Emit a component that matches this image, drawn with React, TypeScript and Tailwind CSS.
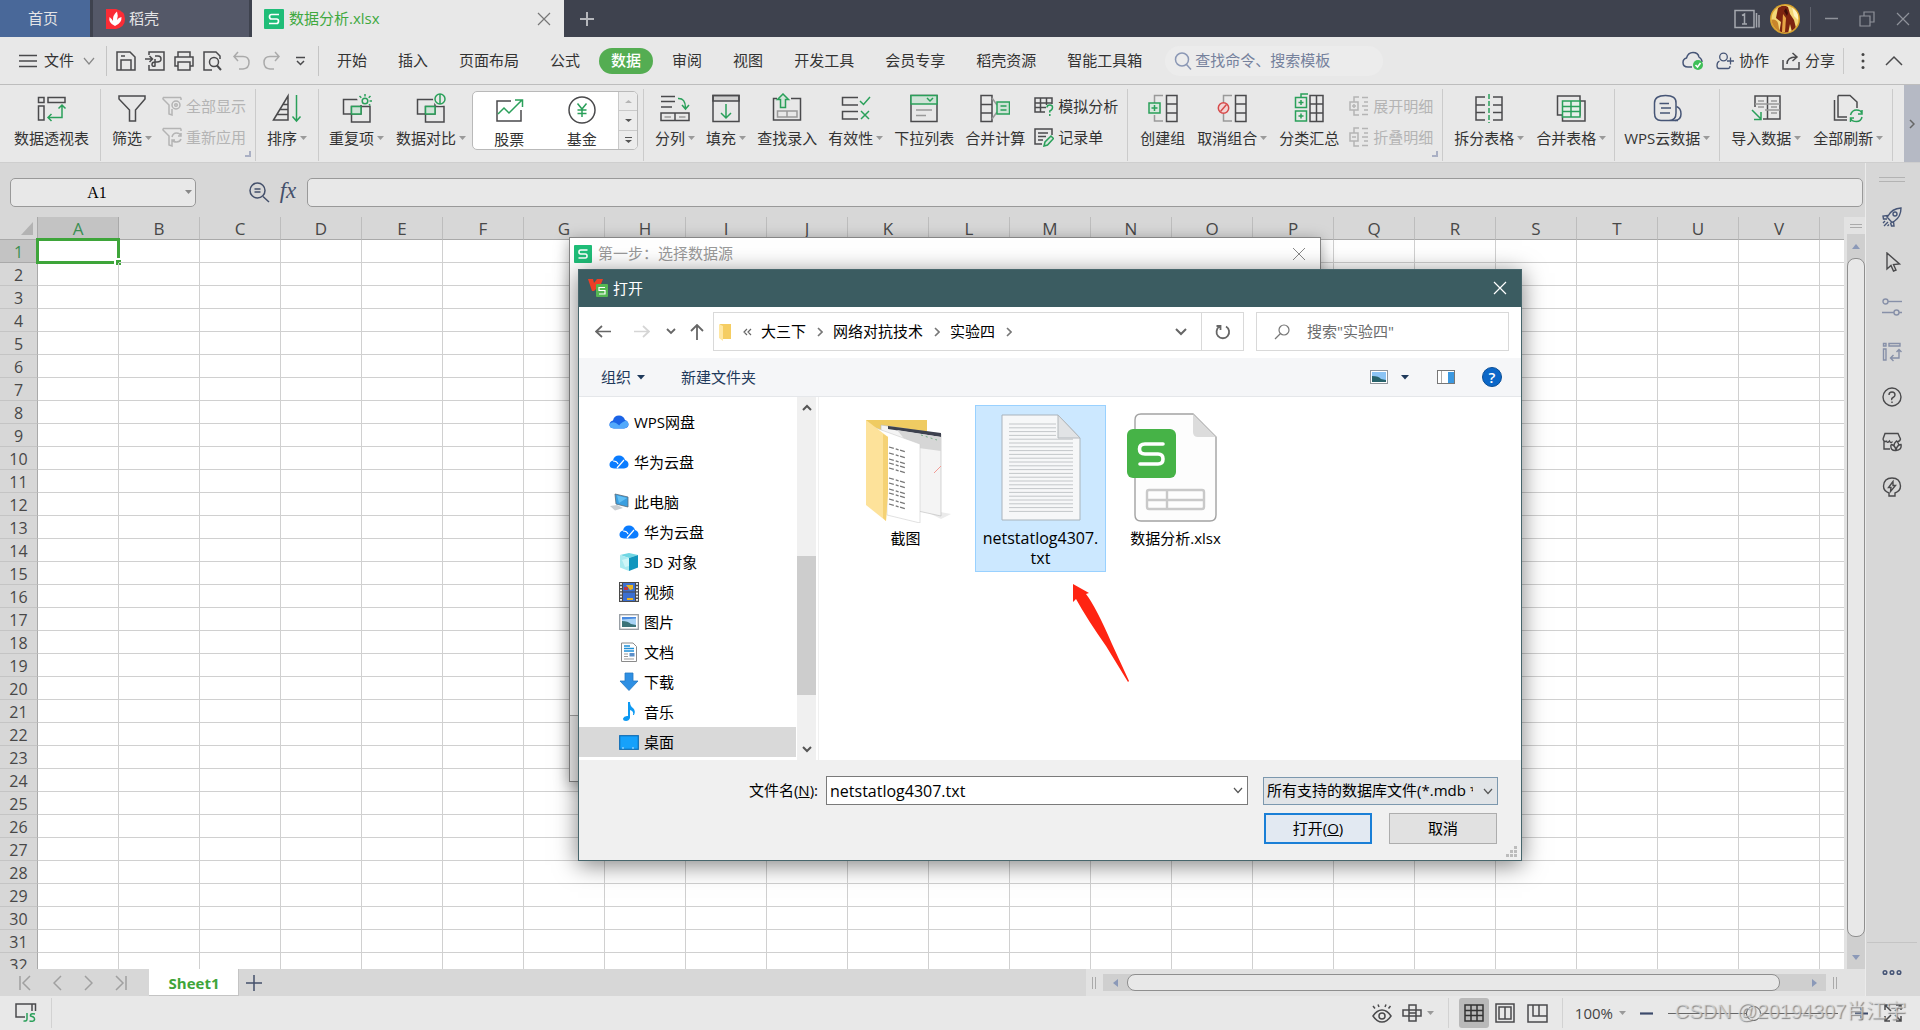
import type { ReactNode } from "react";

const K = "#4a4a4c";
const G = "#2aa05a";
const B = "#465576";

function Ico({ w = 30, h = 30, c = K, sw = 1.5, className = "", children }: {
  w?: number; h?: number; c?: string; sw?: number; className?: string; children: ReactNode;
}) {
  return (
    <svg width={w} height={h} viewBox={`0 0 ${w} ${h}`} fill="none" stroke={c} strokeWidth={sw} className={`shrink-0 ${className}`} aria-hidden="true">
      {children}
    </svg>
  );
}

const Caret = () => (
  <svg width="7" height="5" viewBox="0 0 7 5" className="ml-[3px] shrink-0" aria-hidden="true">
    <path d="M0 0H7L3.5 4Z" fill="#9a9a9a" />
  </svg>
);

/* ribbon icons */
const PivotIcon = () => (
  <Ico>
    <path d="M1.5 4.5H7V9.5H1.5ZM11 4.5H28V9.5H11ZM1.5 13H7V27H1.5Z" />
    <path d="M25 12V24.5H11M21.5 15.5L25 12L28.5 15.5M14.5 21L11 24.5L14.5 28" stroke={G} />
  </Ico>
);
const FilterIcon = () => (
  <Ico><path d="M2 3H28V6L18.5 17V28H12.5V17L2 6Z" /></Ico>
);
const SortIcon = () => (
  <Ico>
    <path d="M1.5 27L16 3V27ZM10.5 11.5H16M7.5 16.5H16M4.5 21.5H16" />
    <path d="M24.5 2V28M20.5 23.5L24.5 28L28.5 23.5" stroke={G} />
  </Ico>
);
const Squares = () => (
  <>
    <path d="M1.5 6.5H19V21H1.5ZM9.5 13.5H28V29H9.5Z" />
    <path d="M9.5 13.5H19V21H9.5Z" fill="#cfe3d7" stroke={G} />
  </>
);
const DuplicateIcon = () => (
  <Ico>
    <Squares />
    <g stroke={G}><path d="M14 2H28V12H17Z" fill="#e8e8e8" stroke="none" /><circle cx="23" cy="8" r="2.8" fill="#e8e8e8" /><path d="M23 1V3.5M17.5 3L19.3 4.7M28.5 3L26.7 4.7M27.5 8H30M28.3 12.5L27 11.3" /></g>
  </Ico>
);
const CompareIcon = () => (
  <Ico>
    <Squares />
    <circle cx="24" cy="6" r="7" fill="#e8e8e8" stroke="none" />
    <circle cx="24" cy="6" r="5" stroke={G} /><path d="M24 1V11" stroke={G} />
  </Ico>
);
const StockIcon = () => (
  <Ico>
    <path d="M17 7H3V27H27V16" />
    <path d="M4 20L10 14L15 19L28 6M21 6H28.5V13" stroke={G} />
  </Ico>
);
const FundIcon = () => (
  <Ico>
    <circle cx="15" cy="16" r="13" />
    <path d="M10.500 9.500L15 15L19.500 9.500M15 15V23M10.500 16H19.500M10.500 19.500H19.500" stroke={G} />
  </Ico>
);
const SplitColIcon = () => (
  <Ico>
    <path d="M1 3.500H15M1 8.500H15M1 14H12M1 20H29V27.500H1ZM15 20V27.500" />
    <path d="M4.500 24H11M19 24H25.500" stroke="#999" />
    <path d="M18 5.500Q25.500 5 25.500 15M22 12L25.500 16L29 12" stroke={G} />
  </Ico>
);
const FillIcon = () => (
  <Ico>
    <path d="M2 2.500H28V8H2Z" fill="#cfcfcf" /><path d="M2 2.500H28V28.500H2Z" />
    <path d="M15 11V25M10 20L15 25L20 20" stroke={G} />
  </Ico>
);
const LookupIcon = () => (
  <Ico>
    <path d="M5 5.500H1.500V27H28.500V5.500H19" />
    <path d="M5.500 18H25V24H5.500ZM15 18V24" stroke="#999" />
    <path d="M11 1L16.500 6.500H13.500V14.500H8.500V6.500H5.500Z" stroke={G} fill="#d5e5db" />
  </Ico>
);
const ValidIcon = () => (
  <Ico>
    <path d="M17 4.500H1.500V12H17M17 18.500H1.500V26H17" />
    <path d="M19 8L22.500 11.500L29 4M20 18L28 26M28 18L20 26" stroke={G} />
  </Ico>
);
const DropListIcon = () => (
  <Ico>
    <path d="M2 2.500H28V28.500H2Z" /><path d="M2 2.500H28V11H2Z" fill="#cfe3d7" stroke={G} />
    <path d="M18 5L21 8L24 5" stroke={G} /><path d="M7 17H23M7 22.500H17" stroke="#999" />
  </Ico>
);
const ConsolidateIcon = () => (
  <Ico>
    <path d="M1 2.500H12V28.500H1ZM1 11.500H12M1 20H12" /><path d="M12 5L17 12M12 26L17 19" stroke="#999" />
    <path d="M17 9H29.500V21H17Z" fill="#cfe3d7" stroke={G} /><path d="M20.500 13H26.500M20.500 17H26.500" stroke={G} />
  </Ico>
);
const GroupIcon = () => (
  <Ico>
    <path d="M15 2.500H6.500V10M6.500 22V28H15" stroke="#999" />
    <path d="M18.500 2.500H29V28.500H18.500ZM18.500 11H29M18.500 20H29" />
    <path d="M1 10H12V20H1Z" fill="#d8e8de" stroke={G} /><path d="M6.500 12V18M3.500 15H9.500" stroke={G} />
  </Ico>
);
const UngroupIcon = () => (
  <Ico>
    <path d="M15 2.500H6.500V9M6.500 21V28H15" stroke="#999" />
    <path d="M18.500 2.500H29V28.500H18.500ZM18.500 11H29M18.500 20H29" />
    <circle cx="6.500" cy="15" r="5.200" stroke="#d64a4a" fill="#f2d5d5" /><path d="M3.500 18.500L9.500 11.500" stroke="#d64a4a" />
  </Ico>
);
const SubtotalIcon = () => (
  <Ico>
    <path d="M16 2.500H29V28.500H16ZM16 11H29M16 20H29M22.500 2.500V28.500" />
    <path d="M1.500 4.500H12.500V14.500H1.500ZM1.500 18H12.500V28H1.500ZM7 7V12M4.500 9.500H9.500M7 20.500V25.500M4.500 23H9.500M7 4.500V1H14" stroke={G} />
  </Ico>
);
const SplitTableIcon = () => (
  <Ico>
    <path d="M11 4H2V27H11M2 12H11M2 19.500H11M19 4H28V27H19M28 12H19M28 19.500H19" />
    <path d="M15 1V30" stroke={G} strokeDasharray="5 2" />
  </Ico>
);
const MergeTableIcon = () => (
  <Ico>
    <path d="M1.500 3H24V22H1.500ZM24 8H29V28H6.500V22" />
    <path d="M6.500 8H24V24H6.500ZM6.500 13.500H24M6.500 18.500H24M15 8V24" stroke={G} fill="#e6efe9" />
  </Ico>
);
const CloudDataIcon = () => (
  <Ico c={B}>
    <path d="M26 27.500H9Q2.500 27.500 2.500 20V10Q2.500 2.500 13.500 2.500T24 10V20Q24 27.500 17 27.500" />
    <path d="M24.500 13.500Q29 15 29 21T23 27.500M7.500 10.500H17M9 15H19M8 20H18" />
  </Ico>
);
const ImportIcon = () => (
  <Ico>
    <path d="M4 14V3H29V26H12M16.500 3V26" /><path d="M7 8H13M20 8H26M7 14H13M20 14H26M20 20H26M4 11H29M14 17H29" stroke="#999" />
    <path d="M1 17L10 26M10 19V26.500H3" stroke={G} />
  </Ico>
);
const RefreshAllIcon = () => (
  <Ico>
    <path d="M1.500 7V27H14M5 2.500H17L24 9V15M5 2.500V24H14" />
    <path d="M17.500 22Q19 17 23.500 17T28.500 20M29 17V21H25M29 24Q28 28.500 23.500 28.500T18 26M17.500 29V25H21" stroke={G} />
  </Ico>
);

/* small ribbon icons */
const ShowAllIcon = () => (
  <Ico w={20} h={20} c="#b4b4b4"><path d="M1 1.500H19M1 1.500V3L7 9V18L10 19V13M19 1.500V4" /><circle cx="14" cy="9" r="4" /><circle cx="14" cy="9" r="1.300" /></Ico>
);
const ReapplyIcon = () => (
  <Ico w={20} h={20} c="#b4b4b4"><path d="M1 1.500H19M1 1.500V3L7 9V18L10 19V16M19 1.500V4M10 10Q11 6 14.500 6T19 9M19 12Q18 15 14.500 15T10.500 13M19 6V9H16M10 16V13H13" /></Ico>
);
const SimulateIcon = () => (
  <Ico w={20} h={20}><path d="M11 16H1V2H18V8M1 7H18M1 11.500H12M6.500 2V16M12.500 2V9" /><path d="M13 11.500Q13 9 15.800 9T18.500 11.500T15.800 15V16.500M15.800 18V20" stroke={G} /></Ico>
);
const RecordIcon = () => (
  <Ico w={20} h={20}><path d="M8 17H1V2H18V8M4 6H14M4 9.500H12M4 13H9" /><path d="M10 19L11 15L17 9L19.500 11.500L13.500 18Z" stroke={G} fill="#d8e8de" /></Ico>
);
const DetailIcon = ({ plus }: { plus: boolean }) => (
  <Ico w={20} h={20} c="#b4b4b4">
    <path d="M10 1H5V6M5 14V19H10M1 6H9V14H1ZM3 10H7M13 1.500H19M15 6H19M13 10H19M15 14H19M13 18.500H19" />
    {plus && <path d="M5 8V12" />}
  </Ico>
);

function Big({ icon, label, caret, className = "px-1.5" }: { icon: ReactNode; label: string; caret?: boolean; className?: string }) {
  return (
    <button className={`flex flex-col items-center ${className}`}>
      {icon}
      <span className="mt-[5px] flex items-center whitespace-nowrap leading-5">
        {label}
        {caret && <Caret />}
      </span>
    </button>
  );
}

function Small({ icon, label, disabled }: { icon: ReactNode; label: string; disabled?: boolean }) {
  return (
    <button disabled={disabled} className="flex h-5 items-center gap-1 whitespace-nowrap leading-5 disabled:text-[#b4b4b4]">
      {icon}
      {label}
    </button>
  );
}

function Group({ children, corner, className = "px-[5px]" }: { children: ReactNode; corner?: boolean; className?: string }) {
  return (
    <div className={`relative flex h-[72px] shrink-0 items-start border-r border-[#cbcbcb] pt-1 ${className}`}>
      {children}
      {corner && <span className="absolute right-1 bottom-1 size-[6px] border-r-2 border-b-2 border-[#aab0c4]" />}
    </div>
  );
}

const SmallCol = ({ children }: { children: ReactNode }) => (
  <div className="flex flex-col gap-[11px] pt-[3px] pr-1 pl-1">{children}</div>
);

function Logo({ size }: { size: number }) {
  return (
    <svg width={size} height={size} viewBox="0 0 20 20" className="shrink-0" aria-hidden="true">
      <rect width="20" height="20" rx="1" fill="#1fbd78" />
      <path d="M15 5.500H7.500Q5.500 5.500 5.500 7.700T7.500 10H12.500Q14.500 10 14.500 12.200T12.500 14.500H5" fill="none" stroke="#fff" strokeWidth="1.700" />
    </svg>
  );
}

function TitleBar() {
  return (
    <header className="flex h-[37px] shrink-0 items-stretch bg-[#3e424e] text-[15px] text-[#e4e4e6]">
      <button className="w-[90px] bg-[#496899] pr-1">首页</button>
      <button className="ml-[3px] flex w-[156px] items-center gap-1 bg-[#545868] pl-[13px]">
        <svg width="19" height="20" viewBox="0 0 19 20" aria-hidden="true">
          <path d="M0 0H10Q19 2 19 10T10 20H0Z" fill="#fb2c36" />
          <path d="M9 17Q2 14 3.500 8Q6 10 7 12Q6.500 6 11 2.500Q12.500 7 11 11Q12.500 8.500 15.500 8Q16 14 9 17Z" fill="#fff" />
        </svg>
        稻壳
      </button>
      <div className="ml-[3px] flex w-[312px] items-center bg-[#e8e8e8] pl-3 text-[#40a83f]">
        <Logo size={20} />
        <span className="ml-[5px] flex-1">数据分析.xlsx</span>
        <button aria-label="关闭" className="mr-[13px]">
          <Ico w={14} h={14} c="#777" sw={1.2}><path d="M1 1L13 13M13 1L1 13" /></Ico>
        </button>
      </div>
      <button aria-label="新建" className="px-[15px]">
        <Ico w={16} h={16} c="#b5b7bc" sw={2}><path d="M8 1V15M1 8H15" /></Ico>
      </button>
      <div className="ml-auto flex items-center">
        <button aria-label="窗口" className="mr-[10px]">
          <Ico w={26} h={20} c="#a5a8af">
            <path d="M1 1.500H20V18.500H1ZM22.500 4V18.500M25 6V18.500M8 6.500L10.500 5V15M8 15H13" />
          </Ico>
        </button>
        <svg width="30" height="30" viewBox="0 0 30 30" aria-hidden="true">
          <defs><clipPath id="av"><circle cx="15" cy="15" r="13.500" /></clipPath></defs>
          <circle cx="15" cy="15" r="15" fill="#d9a22c" />
          <g clipPath="url(#av)">
            <path d="M0 0H30V30H0Z" fill="#f3d777" />
            <path d="M0 16Q6 14 8 19L10 30H0Z" fill="#c9862b" />
            <path d="M8 4Q13 0 18 3L20 10L24 16L26 24L22 28L20 20L18 30H9L11 18L6 14Z" fill="#7d2410" />
            <path d="M13 10L16 14L15 28H12Z" fill="#e9a545" />
            <path d="M16 4L18 9L17 12L14 7Z" fill="#3f0d07" />
            <path d="M22 3Q30 8 28 16L24 12Z" fill="#fff3c0" />
          </g>
        </svg>
        <span className="ml-[10px] h-6 w-px bg-[#5f626d]" />
        <button aria-label="最小化" className="ml-[14px]"><Ico w={13} h={14} c="#8f929a"><path d="M0 6.500H13" /></Ico></button>
        <button aria-label="还原" className="ml-[21px]"><Ico w={16} h={16} c="#8f929a" sw={1.2}><path d="M1 5H11V15H1ZM5 5V1H15V11H11" /></Ico></button>
        <button aria-label="关闭窗口" className="mr-[10px] ml-[21px]"><Ico w={14} h={14} c="#8f929a" sw={1.2}><path d="M1 1L13 13M13 1L1 13" /></Ico></button>
      </div>
    </header>
  );
}

const tabs = ["开始", "插入", "页面布局", "公式", "数据", "审阅", "视图", "开发工具", "会员专享", "稻壳资源", "智能工具箱"];

function MenuBar() {
  return (
    <nav className="flex h-12 shrink-0 items-center border-b border-[#bdbdbd] bg-[#e8e8e8] text-[15px] text-[#333]">
      <button className="ml-[18px] flex items-center gap-[7px]">
        <Ico w={19} h={14} sw={1.4}><path d="M1 1.500H19M1 7H19M1 12.500H19" /></Ico>
        文件
        <Ico w={12} h={8} c="#888" sw={1.2} className="ml-[2px]"><path d="M1 1L6 7L11 1" /></Ico>
      </button>
      <span className="ml-[11px] h-[30px] w-px bg-[#c4c4c4]" />
      <div className="ml-[9px] flex items-center gap-[9px]">
        <button aria-label="保存"><Ico w={20} h={20}><path d="M1 1H14L19 6V19H1ZM5 19V9H15V19M5 5H9" /></Ico></button>
        <button aria-label="输出为PDF"><Ico w={20} h={20}><path d="M4 4V1H19V19H4V14M0 8H7M4.500 5L7.500 8L4.500 11M10 5H13Q16 5 16 8T12 11H10Q7 11 7 13.500T10 15V8" /></Ico></button>
        <button aria-label="打印"><Ico w={20} h={20}><path d="M4 6V1H16V6M4 15H1V6H19V15H16M4 11H16V19H4Z" /></Ico></button>
        <button aria-label="打印预览"><Ico w={20} h={20}><path d="M9 19H1V1H13L17 5V8" /><circle cx="11" cy="11" r="4.500" /><path d="M14 14.500L18 19" strokeWidth={2} /></Ico></button>
        <button aria-label="撤销"><Ico w={20} h={20} c="#aaa"><path d="M6 1L2 5.500L6 10M2 5.500H11Q17 5.500 17 11.500T11 18H7" /></Ico></button>
        <button aria-label="恢复"><Ico w={20} h={20} c="#aaa"><path d="M14 1L18 5.500L14 10M18 5.500H9Q3 5.500 3 11.500T9 18H13" /></Ico></button>
        <button aria-label="更多"><Ico w={20} h={20}><path d="M6 6.500H15M7 10L10.500 13.500L14 10" /></Ico></button>
      </div>
      <span className="ml-2 h-[30px] w-px bg-[#c4c4c4]" />
      <div className="ml-[3px] flex gap-px">
        {tabs.map((t) => (
          <button key={t} className={`mx-[3px] h-[26px] rounded-full px-3 whitespace-nowrap ${t === "数据" ? "bg-[#54ad52] font-medium text-white" : ""}`}>
            {t}
          </button>
        ))}
      </div>
      <label className="ml-2 flex h-[30px] w-[218px] items-center gap-[3px] rounded-full bg-[#ececec] pl-[9px]">
        <Ico w={18} h={18} c="#8b98b5"><circle cx="8" cy="7.500" r="6.500" /><path d="M12.500 12.500L17 17.500" /></Ico>
        <input aria-label="查找命令" placeholder="查找命令、搜索模板" className="w-full min-w-0 bg-transparent outline-none placeholder:text-[#75819c]" />
      </label>
      <div className="ml-auto flex items-center">
        <button aria-label="云同步">
          <Ico w={22} h={20} c={B}>
            <path d="M10 16H6Q1 16 1 11.500Q1 8 4.500 7Q6 1.500 11 1.500T17 6Q20 8 20 11" />
            <circle cx="16" cy="14" r="5" fill="#3fbf57" stroke="none" /><path d="M13.500 14L15.500 16L18.500 12" stroke="#fff" />
          </Ico>
        </button>
        <button className="ml-3 flex items-center gap-[5px]">
          <Ico w={18} h={18} c={B} sw={1.3}><circle cx="7.500" cy="5" r="3.800" /><path d="M3.500 9Q1 10 1 13.500Q1 16.500 3 16.500H12Q14 16.500 14 14M14.500 5.500V12.500M11 9H18" /></Ico>
          协作
        </button>
        <button className="ml-[13px] flex items-center gap-[5px]">
          <Ico w={18} h={18}><path d="M1 8V17H17V10M5 12Q5 5 14 5M10.500 1L15 5L10.500 9" /></Ico>
          分享
        </button>
        <span className="ml-2 h-[26px] w-px bg-[#c9c9c9]" />
        <button aria-label="选项" className="ml-[17px]">
          <svg width="4" height="18" viewBox="0 0 4 18" fill="#444" aria-hidden="true"><circle cx="2" cy="2.500" r="1.500" /><circle cx="2" cy="9" r="1.500" /><circle cx="2" cy="15.500" r="1.500" /></svg>
        </button>
        <button aria-label="收起功能区" className="mr-[17px] ml-5"><Ico w={18} h={11}><path d="M1 10L9 2L17 10" /></Ico></button>
      </div>
    </nav>
  );
}

function Ribbon() {
  return (
    <div className="flex h-[78px] shrink-0 items-start overflow-hidden border-b border-[#cecece] bg-[#e8e8e8] pt-1 text-[15px] text-[#333]">
      <Group className="pr-[5px] pl-2"><Big icon={<PivotIcon />} label="数据透视表" /></Group>
      <Group corner>
        <Big icon={<FilterIcon />} label="筛选" caret />
        <SmallCol>
          <Small icon={<ShowAllIcon />} label="全部显示" disabled />
          <Small icon={<ReapplyIcon />} label="重新应用" disabled />
        </SmallCol>
      </Group>
      <Group><Big icon={<SortIcon />} label="排序" caret /></Group>
      <Group className="pr-[5px] pl-1">
        <Big icon={<DuplicateIcon />} label="重复项" caret />
        <Big icon={<CompareIcon />} label="数据对比" caret />
        <div className="-mt-[2px] flex h-[59px] w-[166px] overflow-hidden rounded-[5px] border border-[#b9b9b9] bg-white">
          <Big icon={<StockIcon />} label="股票" className="flex-1 pt-[2px]" />
          <Big icon={<FundIcon />} label="基金" className="flex-1 pt-[2px]" />
          <div className="flex w-[19px] flex-col divide-y divide-[#c9c9c9] border-l border-[#c9c9c9] bg-[#ececec]">
            <button aria-label="上一行" className="flex flex-1 items-center justify-center"><Ico w={7} h={5} sw={0}><path d="M0 4H7L3.500 1Z" fill="#b5b5b5" /></Ico></button>
            <button aria-label="下一行" className="flex flex-1 items-center justify-center"><Ico w={7} h={5} sw={0}><path d="M0 1H7L3.500 4Z" fill="#555" /></Ico></button>
            <button aria-label="全部" className="flex flex-1 items-center justify-center"><Ico w={7} h={8} sw={0}><path d="M0 1H7V2H0ZM0 4H7L3.500 7Z" fill="#555" /></Ico></button>
          </div>
        </div>
      </Group>
      <Group className="-space-x-px px-[5px]">
        <Big icon={<SplitColIcon />} label="分列" caret />
        <Big icon={<FillIcon />} label="填充" caret />
        <Big icon={<LookupIcon />} label="查找录入" />
        <Big icon={<ValidIcon />} label="有效性" caret />
        <Big icon={<DropListIcon />} label="下拉列表" />
        <Big icon={<ConsolidateIcon />} label="合并计算" />
        <SmallCol>
          <Small icon={<SimulateIcon />} label="模拟分析" />
          <Small icon={<RecordIcon />} label="记录单" />
        </SmallCol>
      </Group>
      <Group corner className="pr-[5px] pl-1.5">
        <Big icon={<GroupIcon />} label="创建组" />
        <Big icon={<UngroupIcon />} label="取消组合" caret />
        <Big icon={<SubtotalIcon />} label="分类汇总" />
        <SmallCol>
          <Small icon={<DetailIcon plus />} label="展开明细" disabled />
          <Small icon={<DetailIcon plus={false} />} label="折叠明细" disabled />
        </SmallCol>
      </Group>
      <Group className="pr-[2px] pl-[5px]">
        <Big icon={<SplitTableIcon />} label="拆分表格" caret />
        <Big icon={<MergeTableIcon />} label="合并表格" caret />
      </Group>
      <Group className="w-[105px] justify-center"><Big icon={<CloudDataIcon />} label="WPS云数据" caret className="" /></Group>
      <Group className="pr-[3px] pl-[5px]">
        <Big icon={<ImportIcon />} label="导入数据" caret />
        <Big icon={<RefreshAllIcon />} label="全部刷新" caret />
      </Group>
      <button aria-label="更多功能" className="-mt-1 ml-auto flex h-[77px] w-4 shrink-0 items-center justify-center bg-[#b5b9c4]">
        <Ico w={6} h={10} c="#666"><path d="M1 1L5 5L1 9" /></Ico>
      </button>
    </div>
  );
}

function FormulaBar() {
  return (
    <div className="flex h-[54px] items-start pt-[15px] pr-[2px] pl-[10px]">
      <div className="relative h-[29px] w-[186px]">
        <input aria-label="名称框" defaultValue="A1" className="size-full rounded-[5px] border border-[#999] bg-[#e8e8e8] pr-3 text-center font-['Liberation_Serif',serif] text-base text-black outline-none" />
        <svg width="7" height="5" viewBox="0 0 7 5" className="absolute top-3 right-1" aria-hidden="true"><path d="M0 0H7L3.500 4Z" fill="#888" /></svg>
      </div>
      <button aria-label="浏览公式结果" className="mt-1 ml-[52px]"><Ico w={22} h={21} c="#44506b"><circle cx="9.500" cy="8.500" r="7.500" /><path d="M15 14.500L21 20M6.500 7H12.500M6.500 10H12.500" /></Ico></button>
      <button aria-label="插入函数" className="ml-[7px] w-[22px] font-['Liberation_Serif',serif] text-[23px] leading-[26px] text-[#44506b] italic">fx</button>
      <input aria-label="编辑栏" className="ml-2 h-[29px] min-w-0 flex-1 rounded-[5px] border border-[#999] bg-[#e8e8e8] px-2 outline-none" />
    </div>
  );
}

const cols = "ABCDEFGHIJKLMNOPQRSTUVW".split("");
const rows = Array.from({ length: 32 }, (_, i) => i + 1);

function Sheet() {
  return (
    <div className="min-h-0 min-w-0 flex-1 overflow-hidden">
      <table className="w-[1901px] table-fixed border-separate border-spacing-0 bg-white text-base text-[#484848]">
        <thead>
          <tr className="h-[23px]">
            <th className="w-[38px] border-r border-b border-[#a9a9a9] bg-[#d7d7d7] p-0">
              <svg width="12" height="13" viewBox="0 0 12 13" className="mr-1 ml-auto" aria-hidden="true"><path d="M12 0V13H0Z" fill="#b3b3b3" /></svg>
            </th>
            {cols.map((c) => (
              <th
                key={c}
                className={`border-r border-b px-0 pt-[2px] pb-0 text-[17px] leading-5 font-normal ${c === "A" ? "border-[#a9a9a9] bg-[#c3c3c3] text-[#3b8f52]" : "border-r-[#bdbdbd] border-b-[#a9a9a9] bg-[#d7d7d7]"}`}
              >
                {c === "W" ? "" : c}
              </th>
            ))}
          </tr>
        </thead>
        <tbody>
          {rows.map((r) => (
            <tr key={r} className="h-[23px]">
              <th className={`border-r border-b border-r-[#a9a9a9] px-0 pt-[2px] pb-0 leading-5 font-normal ${r === 1 ? "border-b-[#a9a9a9] bg-[#c3c3c3] text-[#3b8f52]" : "border-b-[#c4c4c4] bg-[#d7d7d7]"}`}>
                {r}
              </th>
              {cols.map((c) => (
                <td key={c} className="relative border-r border-b border-[#d0d0d0] p-0">
                  {c === "A" && r === 1 && (
                    <span className="absolute -inset-[2px] border-[3px] border-[#3ea53a]">
                      <span className="absolute -right-1 -bottom-1 size-[7px] border-t-2 border-l-2 border-white bg-[#3ea53a]" />
                    </span>
                  )}
                </td>
              ))}
            </tr>
          ))}
        </tbody>
      </table>
    </div>
  );
}

function VScroll() {
  return (
    <div className="flex w-[21px] shrink-0 flex-col bg-[#e2e2e2] pl-[3px]">
      <div className="flex h-[17px] flex-col items-center justify-center gap-[2px]">
        <span className="h-px w-3 bg-[#aaa]" />
        <span className="h-px w-3 bg-[#aaa]" />
      </div>
      <div className="flex min-h-0 flex-1 flex-col items-center bg-[#cfcfcf]">
        <div className="flex h-6 items-center"><Ico w={8} h={5} sw={0}><path d="M0 5H8L4 0Z" fill="#8b99b8" /></Ico></div>
        <div className="w-full flex-1 rounded-lg border border-[#8f8f8f] bg-[#e8e8e8]" />
        <div className="flex h-8 items-center pt-2"><Ico w={8} h={5} sw={0}><path d="M0 0H8L4 5Z" fill="#8b99b8" /></Ico></div>
      </div>
    </div>
  );
}

function SheetTabs() {
  return (
    <div className="flex h-[27px] shrink-0 items-stretch bg-[#d7d7d7]">
      <div className="flex w-[149px] items-center gap-[22px] pl-[19px]">
        <button aria-label="第一张"><Ico w={12} h={16} c="#a0a0a0"><path d="M1 1V15M11 1L4 8L11 15" /></Ico></button>
        <button aria-label="上一张"><Ico w={9} h={16} c="#a0a0a0"><path d="M8 1L1 8L8 15" /></Ico></button>
        <button aria-label="下一张"><Ico w={9} h={16} c="#a0a0a0"><path d="M1 1L8 8L1 15" /></Ico></button>
        <button aria-label="最后一张"><Ico w={12} h={16} c="#a0a0a0"><path d="M11 1V15M1 1L8 8L1 15" /></Ico></button>
      </div>
      <button className="w-[90px] border-r border-b border-[#c4c4c4] bg-white pt-[2px] pl-px text-[15px] font-bold text-[#3ea53a]">Sheet1</button>
      <button aria-label="新建工作表" className="ml-[6px]"><Ico w={18} h={18} c="#44506b"><path d="M9 1V17M1 9H17" /></Ico></button>
      <div className="ml-auto flex w-[779px] items-center bg-[#e2e2e2] pl-[6px]">
        <Ico w={4} h={12} c="#aaa" sw={1}><path d="M.5 0V12M3.500 0V12" /></Ico>
        <div className="mx-[7px] flex h-[17px] flex-1 items-center bg-[#cfcfcf]">
          <div className="flex w-6 justify-center"><Ico w={5} h={8} sw={0}><path d="M5 0V8L0 4Z" fill="#8b99b8" /></Ico></div>
          <div className="h-[17px] flex-1 rounded-lg border border-[#8f8f8f] bg-[#e8e8e8]" />
          <div className="flex w-[46px] justify-end pr-[9px]"><Ico w={5} h={8} sw={0}><path d="M0 0V8L5 4Z" fill="#8b99b8" /></Ico></div>
        </div>
        <Ico w={4} h={12} c="#aaa" sw={1} className="mr-7"><path d="M.5 0V12M3.500 0V12" /></Ico>
      </div>
    </div>
  );
}

function SidePanel() {
  return (
    <aside className="flex w-[55px] shrink-0 flex-col items-center border-l border-[#ebebeb] bg-[#d7d7d7] pt-[14px] pr-[2px]">
      <div className="h-[5px] w-[26px] border-y border-[#b3b3b3]" />
      <div className="mt-[25px] flex flex-col gap-[25px]">
        <button aria-label="火箭" className="h-5"><Ico w={20} h={20} c={B} sw={1.4}><path d="M6 9Q10 1.500 19 1Q19 10 12 14.500L10 15.500L5 10ZM6 8.500L1 9L1.500 12L5 12M11.500 14.500L12 19L9.500 19L8.500 15.500M1 16L3 14M2 19L6 15M5.500 19L7 17.500" /><circle cx="13" cy="7" r="2" /></Ico></button>
        <button aria-label="选择" className="h-5"><Ico w={20} h={20} sw={1.4}><path d="M5 1V17L9 13.500L11.500 19L14 18L11.500 12.500L17.500 12Z" /></Ico></button>
        <button aria-label="属性" className="h-5"><Ico w={20} h={20} c="#8790a8" sw={1.4}><circle cx="3.500" cy="4.500" r="2.500" /><path d="M6 4.500H20" /><circle cx="14.500" cy="15.500" r="2.500" /><path d="M0 15.500H12M17 15.500H20" /></Ico></button>
        <button aria-label="透视表" className="h-5"><Ico w={20} h={20} c="#8790a8" sw={1.4}><path d="M1.500 1.500H4V4H1.500ZM7 1.500H18V4H7ZM1.500 7H4V18H1.500ZM17 8V16H9M14.500 10L17 7.500L19.500 10M11.500 13L8.500 16L11.500 19" /></Ico></button>
        <button aria-label="帮助" className="h-5"><Ico w={20} h={20} sw={1.4}><circle cx="10" cy="10" r="9" /><path d="M7 8Q7 5 10 5T13 8Q13 9.500 11 10.500T10 13M10 14.500V16" /></Ico></button>
        <button aria-label="稻壳商城" className="h-5"><Ico w={20} h={20} sw={1.4}><path d="M8 17H2V9M1 7L3 1.500H16L18.500 7Q18 9.500 15.500 9.500M1 7Q1.500 10 4.500 9.500M4.500 8.500Q5 12 7.500 9Q9 12 10.500 9.500M9 12.500Q13 13 14 18Q15 13 19 12.500Q20 18 14 18.500T9 12.500M12 13.500Q12 11 14.500 9Q17 11 16.500 13" /></Ico></button>
        <button aria-label="灵感" className="h-5"><Ico w={20} h={20} sw={1.4}><path d="M7 16Q1.500 14 1.500 9Q2 1 10 1T18.500 9Q18.500 14 13 16V19H7Z" /><path d="M11 4.500L6.500 10.500H9L8.500 14.500L13.500 8.500H11Z" /></Ico></button>
      </div>
      <div className="mt-auto flex h-[54px] w-[50px] justify-center border-t border-[#c4c4c4] pt-[25px]">
        <button aria-label="更多面板" className="h-2"><Ico w={20} h={7} c={B}><circle cx="3" cy="3.500" r="1.800" /><circle cx="10" cy="3.500" r="1.800" /><circle cx="17" cy="3.500" r="1.800" /></Ico></button>
      </div>
    </aside>
  );
}

function StatusBar() {
  return (
    <footer className="relative flex h-[34px] shrink-0 items-center bg-[#e8e8e8] text-[15px] text-[#444]">
      <button aria-label="JS宏" className="ml-[15px]">
        <svg width="22" height="20" viewBox="0 0 22 20" fill="none" stroke={K} strokeWidth="1.500" aria-hidden="true">
          <path d="M10 14H1V1H17V8M17 1H20.500V8" />
          <path d="M12 10V16Q12 18.500 8.500 18M20 11Q15 10 15.500 13Q20 14 19.500 16.500T14.500 18" stroke={G} />
        </svg>
      </button>
      <span className="ml-[14px] h-[30px] w-px bg-[#d2d2d2]" />
      <div className="ml-auto flex items-center">
        <button aria-label="护眼模式"><Ico w={20} h={20}><path d="M1 13Q5 7 10 7T19 13Q15 19 10 19T1 13ZM1 3L3 5.500M6 1.500L7 4M18.500 3L16.500 5.500M14 1.500L13 4" /><circle cx="10" cy="13" r="3" /></Ico></button>
        <button aria-label="阅读模式" className="ml-[10px] flex items-center gap-[2px]">
          <Ico w={20} h={18}><path d="M7 1H14V17H7ZM1 6H19V12H1ZM7 9H14" /></Ico>
          <Caret />
        </button>
        <span className="ml-[14px] h-[30px] w-px bg-[#d2d2d2]" />
        <button aria-label="普通视图" className="ml-[10px] flex h-[30px] w-[30px] items-center justify-center rounded-[3px] bg-[#b9b9b9]"><Ico w={20} h={18} c="#333"><path d="M1 1H19V17H1ZM1 6.500H19M1 11.500H19M7 1V17M13 1V17" /></Ico></button>
        <button aria-label="分页预览" className="ml-[6px]"><Ico w={20} h={20}><path d="M1 1H19V19H1ZM4 4H16V16H4ZM10 4V16" /></Ico></button>
        <button aria-label="页面布局视图" className="ml-[12px]"><Ico w={21} h={19}><path d="M1 1H20V18H1ZM6 1V12H20M12 1V12" /></Ico></button>
        <span className="ml-[14px] h-[30px] w-px bg-[#d2d2d2]" />
        <button className="ml-3 flex items-center gap-[3px]">100%<Caret /></button>
        <button aria-label="缩小" className="ml-[14px]"><Ico w={13} h={13} c="#3c4a6b" sw={2.2}><path d="M0 6.500H13" /></Ico></button>
        <input
          type="range"
          aria-label="缩放比例"
          defaultValue={50}
          className="mr-[17px] ml-[15px] h-4 w-[170px] appearance-none bg-[linear-gradient(#666,#666)] bg-[length:100%_1px] bg-center bg-no-repeat [&::-webkit-slider-thumb]:size-[15px] [&::-webkit-slider-thumb]:appearance-none [&::-webkit-slider-thumb]:rounded-full [&::-webkit-slider-thumb]:border [&::-webkit-slider-thumb]:border-[#555] [&::-webkit-slider-thumb]:bg-[#e8e8e8]"
        />
        <button aria-label="放大"><Ico w={13} h={13} c="#3c4a6b" sw={2.2}><path d="M6.500 0V13M0 6.500H13" /></Ico></button>
        <button aria-label="全屏" className="mr-[18px] ml-4"><Ico w={18} h={18}><path d="M1 6V1H6M12 1H17V6M17 12V17H12M6 17H1V12M1 1L7 7M17 1L11 7M17 17L11 11M1 17L7 11" /></Ico></button>
      </div>
      <span className="pointer-events-none absolute top-[3px] right-[14px] font-['Liberation_Sans','Noto_Sans_CJK_SC',sans-serif] text-[20px] leading-6 whitespace-nowrap text-[#e8e8e8]/60 [text-shadow:1px_1px_1px_#888]">CSDN @20194307肖江宇</span>
    </footer>
  );
}

function StepDialog() {
  return (
    <section className="absolute top-[237px] left-[569px] flex h-[545px] w-[752px] flex-col border border-[#868686] bg-white text-[15px] shadow-[0_3px_14px_rgba(0,0,0,0.35)]">
      <div className="flex h-[31px] items-center pr-[14px] pl-1 text-[#999]">
        <Logo size={18} />
        <span className="ml-[6px]">第一步：选择数据源</span>
        <button aria-label="关闭向导" className="ml-auto"><Ico w={14} h={14} c="#888" sw={1}><path d="M1 1L13 13M13 1L1 13" /></Ico></button>
      </div>
      <div className="mt-auto h-[66px] border-t border-[#a5a5a5] bg-[#f0f0f0]" />
    </section>
  );
}

const CloudIcon = ({ wps }: { wps?: boolean }) => (
  <svg width="20" height="14" viewBox="0 0 20 14" aria-hidden="true">
    <path d="M5 13.500Q0 13 .5 9Q1 6 4 5.500Q5 .5 10 .5Q14.500 .5 16 5Q19.500 6 19.500 9.500T15 13.500Z" fill={wps ? "#1a63e6" : "#0a7cff"} />
    {wps ? <path d="M9 13.500Q10 8 17 5.500Q19.500 7 19.500 9.500T15 13.500ZM5 13.500Q0 13 .5 9Q3 6 7 8L11 11L9 13.500Z" fill="#52a9fb" /> : <path d="M4 6Q8 6 9 9M8 13L15 5" fill="none" stroke="#fff" strokeWidth="1.200" />}
  </svg>
);
const PcIcon = () => (
  <svg width="20" height="18" viewBox="0 0 20 18" aria-hidden="true">
    <path d="M6 1L19 4V14L7 11Z" fill="#3a9fe0" stroke="#5b6b78" strokeWidth=".8" /><path d="M8 2.500L18 5L10 10Z" fill="#63c0f4" /><path d="M1 13L8 12L14 15L6 17.500Z" fill="#c9ced2" />
  </svg>
);
const CubeIcon = () => (
  <svg width="20" height="20" viewBox="0 0 20 20" aria-hidden="true">
    <path d="M1 3L10 1L19 3L10 6Z" fill="#6fd6e3" /><path d="M1 3L10 6V19L1 15.500Z" fill="#a9eaf0" /><path d="M19 3L10 6V19L19 15.500Z" fill="#1296bd" /><path d="M3 8L10 6V14L6 15Z" fill="#e0fbfb" opacity=".7" />
  </svg>
);
const VideoIcon = () => (
  <svg width="20" height="20" viewBox="0 0 20 20" aria-hidden="true">
    <rect width="20" height="20" fill="#4a4a4a" /><rect x="4" y="1" width="12" height="8.500" fill="#3b6fd0" /><rect x="4" y="10.500" width="12" height="8.500" fill="#3b6fd0" />
    <path d="M7 3H14V7L11 8ZM8 16H14V18H8Z" fill="#e8b423" /><path d="M5 5H9V8H5Z" fill="#b9354a" /><path d="M2 1V20M18 1V20" stroke="#eee" strokeWidth="2" strokeDasharray="1.800 1.400" />
  </svg>
);
const PictureIcon = () => (
  <svg width="20" height="16" viewBox="0 0 20 16" aria-hidden="true">
    <rect x=".7" y=".7" width="18.600" height="14.600" fill="#fff" stroke="#959ba1" strokeWidth="1.300" /><rect x="3" y="3" width="14" height="10" fill="#a8d3f5" />
    <path d="M3 7Q9 7 12 10L17 11V13H3Z" fill="#3a7379" /><path d="M3 3H17V4.500L3 5.500Z" fill="#4a8ae0" />
  </svg>
);
const DocIcon = () => (
  <svg width="20" height="20" viewBox="0 0 20 20" aria-hidden="true">
    <path d="M2.500 1H14L17.500 4.500V19.500H2.500Z" fill="#fff" stroke="#8b8b8b" /><path d="M5 4H11M5 6.500H15M5 9H15" stroke="#1d8fd8" strokeWidth="1.300" /><path d="M5 12H9M5 14.500H9M5 17H15" stroke="#999" /><rect x="10.500" y="11" width="5" height="3.500" fill="#5b8fc9" />
  </svg>
);
const DownIcon = () => (
  <svg width="20" height="20" viewBox="0 0 20 20" aria-hidden="true"><path d="M6 1H14V9H19L10 18.500L1 9H6Z" fill="#2e8fe3" stroke="#2478c4" strokeWidth=".8" /></svg>
);
const MusicIcon = () => (
  <svg width="20" height="20" viewBox="0 0 20 20" aria-hidden="true"><path d="M9 0H11Q11 4 14 6Q17 9 15 13L14 13Q15 9 11 8V16Q10 19 7 19T4 16.500Q5 13.500 9 14Z" fill="#0d99f2" /></svg>
);
const DesktopIcon = () => (
  <svg width="20" height="15" viewBox="0 0 20 15" aria-hidden="true"><rect x=".7" y=".7" width="18.600" height="13.600" fill="#16a1fb" stroke="#0e6db5" strokeWidth="1.200" /><path d="M3 13H17" stroke="#bde4ff" strokeDasharray="2 8" /></svg>
);

const places = [
  { label: "华为云盘", icon: <CloudIcon /> },
  { label: "3D 对象", icon: <CubeIcon /> },
  { label: "视频", icon: <VideoIcon /> },
  { label: "图片", icon: <PictureIcon /> },
  { label: "文档", icon: <DocIcon /> },
  { label: "下载", icon: <DownIcon /> },
  { label: "音乐", icon: <MusicIcon /> },
  { label: "桌面", icon: <DesktopIcon />, active: true },
];

const FolderArt = () => (
  <svg width="90" height="110" viewBox="0 0 90 110" aria-hidden="true">
    <path d="M5 7H66V90H5Z" fill="#efcb62" />
    <path d="M58 95L90 101L80 106Z" fill="#ddd" opacity=".6" />
    <path d="M20 12L80 21V103L20 90Z" fill="#f4f4f4" stroke="#bbb" strokeWidth=".6" /><path d="M27 13L80 20V24L27 16Z" fill="#3d414e" />
    <path d="M36 17L80 24V38L50 34Z" fill="#d6d6d6" /><path d="M60 22L76 27" stroke="#78b28a" strokeDasharray="2 3" /><path d="M80 53L73 60" stroke="#f29b95" />
    <path d="M12 14L59 31V110L26 102V30Z" fill="#fff" stroke="#ccc" strokeWidth=".6" />
    {[34, 40, 46, 50, 55, 65, 70, 76, 80, 86, 91].map((y) => <path key={y} d={`M28 ${y}L45 ${y + 5}`} stroke="#777" strokeWidth="1.300" strokeDasharray="5 2 3 1.500" />)}
    <path d="M5 7L27 24V78L25 108L5 92Z" fill="#fde29a" /><path d="M22 21L27 24V78L25 108L22 105Z" fill="#f5d275" />
  </svg>
);
const TextArt = () => (
  <svg width="80" height="108" viewBox="0 0 80 108" aria-hidden="true">
    <path d="M1 1H57L79 24V106H1Z" fill="#f6f7f8" stroke="#a9b3bb" />
    {Array.from({ length: 24 }, (_, i) => <path key={i} d={`M8 ${10 + i * 3.8}H${i < 4 ? 55 : 72}`} stroke="#c3c6c9" />)}
    <path d="M57 1V24H79Z" fill="#e1e3e5" stroke="#b3b8bc" />
  </svg>
);
const XlsxArt = () => (
  <svg width="100" height="110" viewBox="0 0 100 110" aria-hidden="true">
    <path d="M15 1H67L90 24V102Q90 108 84 108H15Q9 108 9 102V7Q9 1 15 1Z" fill="#fdfdfd" stroke="#a2a2a2" strokeWidth="1.400" />
    <path d="M67 1L90 24H72Q67 24 67 19Z" fill="#dcdcdc" />
    <rect x="1" y="16" width="49" height="49" rx="6" fill="#46b347" />
    <path d="M37 31H19Q13.500 31 13.500 36T19 41H32Q37 41 37 46T32 51H14" fill="none" stroke="#fff" strokeWidth="3.600" strokeLinecap="round" />
    <rect x="21" y="77" width="57" height="19" rx="2" fill="none" stroke="#c9c9c9" strokeWidth="2.400" /><path d="M21 87H78M41 77V96" stroke="#c9c9c9" strokeWidth="2.400" />
  </svg>
);

const files = [
  { lines: ["截图"], art: <FolderArt /> },
  { lines: ["netstatlog4307.", "txt"], art: <TextArt />, selected: true },
  { lines: ["数据分析.xlsx"], art: <XlsxArt /> },
];

const Chevron = () => <Ico w={6} h={10} c="#777" sw={1.6}><path d="M1 1L5 5L1 9" /></Ico>;
const ChevDown = () => <Ico w={10} h={7} c="#666" sw={1.8}><path d="M1 1L5 5L9 1" /></Ico>;

function OpenDialog() {
  return (
    <section className="absolute top-[269px] left-[578px] flex h-[592px] w-[944px] flex-col border border-[#47666c] bg-white text-[15px] text-black shadow-[0_4px_22px_rgba(0,0,0,0.5)]">
      <div className="flex h-[37px] shrink-0 items-center bg-[#3b5c61] pr-[14px] pb-px pl-[9px] text-white">
        <svg width="20" height="19" viewBox="0 0 20 19" aria-hidden="true">
          <path d="M0 0H5L6 4L9 0H15L13 5L6 12H4Z" fill="#ee3f26" /><rect x="8" y="5" width="12" height="13" rx="1" fill="#54b852" />
          <path d="M17 8.500H11V11.500H17V15H11" fill="none" stroke="#fff" strokeWidth="1.200" />
        </svg>
        <span className="ml-[5px]">打开</span>
        <button aria-label="关闭对话框" className="ml-auto"><Ico w={14} h={14} c="#fff" sw={1.2}><path d="M1 1L13 13M13 1L1 13" /></Ico></button>
      </div>
      <div className="flex h-[51px] shrink-0 items-center pr-3 pb-[2px]">
        <button aria-label="后退" className="ml-4"><Ico w={16} h={13} c="#666" sw={1.7}><path d="M16 6.500H1M7 1L1 6.500L7 12" /></Ico></button>
        <button aria-label="前进" className="ml-[23px]"><Ico w={16} h={13} c="#d5d5d5" sw={1.7}><path d="M0 6.500H15M9 1L15 6.500L9 12" /></Ico></button>
        <button aria-label="最近位置" className="ml-4"><ChevDown /></button>
        <button aria-label="上移" className="ml-[14px]"><Ico w={14} h={16} c="#666" sw={1.8}><path d="M7 16V1M1 7L7 1L13 7" /></Ico></button>
        <div className="ml-[9px] flex h-[39px] min-w-0 flex-1 items-center border border-[#d9d9d9] pl-[5px]">
          <svg width="14" height="18" viewBox="0 0 14 18" className="shrink-0" aria-hidden="true"><path d="M1 1H12V16H1Z" fill="#f5cd62" /><path d="M0 1L4 3V18L0 15Z" fill="#ffe7a2" /></svg>
          <Ico w={9} h={8} c="#666" sw={1.2} className="ml-[10px]"><path d="M4 1L1 4L4 7M8 1L5 4L8 7" /></Ico>
          <button className="mr-[11px] ml-[9px]">大三下</button>
          <Chevron />
          <button className="mr-[11px] ml-[10px]">网络对抗技术</button>
          <Chevron />
          <button className="mr-[11px] ml-[10px]">实验四</button>
          <Chevron />
          <button aria-label="以前的位置" className="mr-[14px] ml-auto"><Ico w={12} h={8} c="#666" sw={2}><path d="M1 1L6 6L11 1" /></Ico></button>
          <button aria-label="刷新" className="flex h-full w-[42px] items-center justify-center border-l border-[#d9d9d9]">
            <Ico w={16} h={16} c="#666" sw={1.8}><path d="M11 2.500A6.300 6.300 0 1 1 4.500 2.600M1.500 2H5.500V6" /></Ico>
          </button>
        </div>
        <label className="ml-3 flex h-[39px] w-[253px] items-center border border-[#d9d9d9] pl-[17px]">
          <Ico w={16} h={16} c="#777" sw={1.2}><circle cx="10" cy="6" r="5" /><path d="M6.500 9.500L1 15" /></Ico>
          <input aria-label="搜索" placeholder={'搜索"实验四"'} className="ml-[17px] w-full min-w-0 outline-none placeholder:text-[#6d6d6d]" />
        </label>
      </div>
      <div className="flex h-[39px] shrink-0 items-center border-b border-[#e5e7ea] bg-[#f5f6f8] pr-[19px] pl-[22px] text-[#1e395b]">
        <button className="flex items-center gap-[6px]">组织<Ico w={8} h={5} sw={0}><path d="M0 0H8L4 4.500Z" fill="#1e395b" /></Ico></button>
        <button className="ml-9">新建文件夹</button>
        <button aria-label="更改视图" className="ml-auto flex items-center gap-[13px]">
          <svg width="18" height="14" viewBox="0 0 18 14" aria-hidden="true"><rect x=".5" y=".5" width="17" height="13" fill="#fff" stroke="#8f959b" /><rect x="2" y="2" width="14" height="10" fill="#8cc4f4" /><path d="M2 6Q9 6 11 9L16 10V12H2Z" fill="#27636b" /></svg>
          <Ico w={8} h={5} sw={0}><path d="M0 0H8L4 4.500Z" fill="#1e395b" /></Ico>
        </button>
        <button aria-label="预览窗格" className="ml-7"><svg width="18" height="14" viewBox="0 0 18 14" aria-hidden="true"><rect x=".5" y=".5" width="17" height="13" fill="#fff" stroke="#777" /><rect x="11" y="2" width="6" height="11" fill="#3b98e0" /><path d="M4.500 1V13" stroke="#aaa" /></svg></button>
        <button aria-label="帮助" className="ml-[27px] size-5 rounded-full border border-[#0a4e96] bg-[#0b67c8] text-[15px] leading-[18px] font-semibold text-white">?</button>
      </div>
      <div className="flex min-h-0 flex-1">
        <ul className="w-[217px] shrink-0 pt-[10px] leading-[30px]">
          <li className="mb-[10px] flex h-[30px] items-center gap-[5px] pl-[30px]"><CloudIcon wps />WPS网盘</li>
          <li className="mb-[10px] flex h-[30px] items-center gap-[5px] pl-[30px]"><CloudIcon />华为云盘</li>
          <li className="flex h-[30px] items-center gap-[5px] pl-[30px]"><PcIcon />此电脑</li>
          {places.map((p) => (
            <li key={p.label} className={`flex h-[30px] items-center gap-[5px] pl-10 ${p.active ? "bg-[#d9d9d9]" : ""}`}>
              {p.icon}
              {p.label}
            </li>
          ))}
        </ul>
        <div className="ml-px flex w-[19px] shrink-0 flex-col items-center bg-[#f0f0f0]">
          <div className="flex h-[159px] items-start pt-[7px]"><Ico w={10} h={7} c="#555" sw={2}><path d="M1 6L5 2L9 6" /></Ico></div>
          <div className="h-[139px] w-full bg-[#cdcdcd]" />
          <div className="mt-auto flex h-[14px] items-start"><Ico w={10} h={7} c="#555" sw={2}><path d="M1 1L5 5L9 1" /></Ico></div>
        </div>
        <div className="ml-[2px] flex min-w-0 flex-1 items-start gap-1 border-l border-[#f0f0f0] pt-2 pl-[21px]">
          {files.map((f) => (
            <button key={f.lines[0]} className={`flex w-[131px] flex-col items-center border pb-[3px] leading-5 ${f.selected ? "border-[#99d1ff] bg-[#cce8ff] text-base leading-5" : "border-transparent"}`}>
              <span className="flex h-[122px] items-center pt-[2px]">{f.art}</span>
              {f.lines.map((l) => <span key={l}>{l}</span>)}
            </button>
          ))}
        </div>
      </div>
      <div className="flex h-[100px] shrink-0 flex-col items-end bg-[#f0f0f0] pt-4 pr-[23px]">
        <div className="flex items-center">
          <label htmlFor="fname" className="mr-2">文件名(<u>N</u>):</label>
          <div className="relative h-[29px] w-[422px]">
            <input id="fname" defaultValue="netstatlog4307.txt" className="size-full border border-[#7a7a7a] bg-white pl-[3px] text-base outline-none" />
            <Ico w={10} h={7} c="#555" sw={1.2} className="pointer-events-none absolute top-[11px] right-[5px]"><path d="M1 1L5 5.500L9 1" /></Ico>
          </div>
          <div className="relative ml-[15px] h-[28px] w-[235px]">
            <select aria-label="文件类型" className="size-full appearance-none border border-[#7c98ae] bg-[#e1e4e7] pr-6 pl-[3px] outline-none">
              <option>所有支持的数据库文件(*.mdb *.accdb)</option>
            </select>
            <Ico w={10} h={7} c="#555" sw={1.2} className="pointer-events-none absolute top-[11px] right-[5px]"><path d="M1 1L5 5.500L9 1" /></Ico>
          </div>
        </div>
        <div className="mt-2 mr-px flex gap-[17px]">
          <button className="h-[31px] w-[108px] border-2 border-[#1a7fd6] bg-[#e2e9f2]">打开(<u>O</u>)</button>
          <button className="h-[31px] w-[108px] border border-[#adadad] bg-[#e1e1e1]">取消</button>
        </div>
      </div>
      <svg width="12" height="12" viewBox="0 0 12 12" fill="#bcbcbc" className="absolute right-[3px] bottom-[2px]" aria-hidden="true">
        <path d="M8 0H11V3H8ZM8 4H11V7H8ZM4 4H7V7H4ZM8 8H11V11H8ZM4 8H7V11H4ZM0 8H3V11H0Z" />
      </svg>
      <svg width="58" height="100" viewBox="0 0 58 100" className="absolute top-[313px] left-[492px]" aria-hidden="true">
        <path d="M2 1L18 10L15 11Q25 24 41 61L58 98L57 99L35 63Q16 36 5 16L2 19Z" fill="#ff2412" />
      </svg>
    </section>
  );
}

export default function App() {
  return (
    <div className="relative flex h-screen flex-col overflow-hidden bg-[#d7d7d7] font-['Open_Sans','Noto_Sans_CJK_SC',sans-serif]">
      <TitleBar />
      <MenuBar />
      <Ribbon />
      <div className="flex min-h-0 flex-1">
        <div className="flex min-w-0 flex-1 flex-col">
          <FormulaBar />
          <div className="flex min-h-0 flex-1">
            <Sheet />
            <VScroll />
          </div>
          <SheetTabs />
        </div>
        <SidePanel />
      </div>
      <StatusBar />
      <StepDialog />
      <OpenDialog />
    </div>
  );
}
